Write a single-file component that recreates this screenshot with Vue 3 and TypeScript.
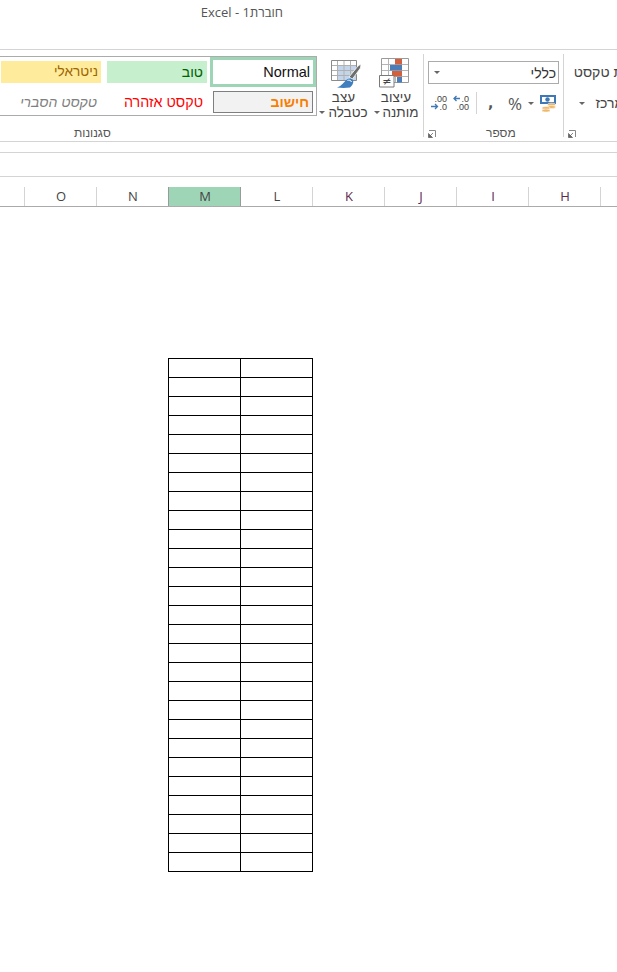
<template>
  <div class="excel">
    <div class="title-bar" dir="rtl">חוברת1 - Excel</div>

    <div class="ribbon">
      <section class="group styles-group">
        <div class="styles-body">
          <div class="gallery" dir="rtl">
            <div
              v-for="cell in styleCells"
              :key="cell.label"
              class="style-cell"
              :class="cell.kind"
            >
              {{ cell.label }}
            </div>
          </div>

          <button class="big-btn table-btn">
            <svg width="32" height="33" viewBox="0 0 32 33">
              <path d="M1.500 4.500h25v20h-25z" fill="#fff" />
              <path d="M7.500 9.500h19v15h-19z" fill="#c3d5ea" />
              <path d="M1.500 9.500h25M1.500 14.500h25M1.500 19.500h25M7.500 4.500v20M14 4.500v20M20.500 4.500v20" stroke="#b0b0b0" fill="none" />
              <path d="M1.500 4.500h25v20h-25z" fill="none" stroke="#8a8a8a" />
              <path d="M19 21l9-11 3-2-.5 4-8 11z" fill="#6e6e6e" stroke="#fff" stroke-width=".8" />
              <path d="M17 23.500c2-1.500 5-1 6 .5 1 3-1 6-3 7.500-4 .5-9 .5-13 0 5-1.500 7-6 10-8z" fill="#3f7fbf" />
              <path d="M17.500 24.500c1.500-.8 3.500-.2 4 1.500" stroke="#fff" fill="none" />
            </svg>
            <span class="btn-label">עצב</span>
            <span class="btn-label with-caret" dir="rtl">כטבלה<i class="caret" /></span>
          </button>

          <button class="big-btn cond-btn">
            <svg width="34" height="33" viewBox="0 0 34 33">
              <path d="M2.500 2.500h27v24h-27z" fill="#fff" />
              <path d="M9.500 2.500v24M16.500 2.500v24M22.500 2.500v24M2.500 8.500h27M2.500 14.500h27M2.500 20.500h27" stroke="#b5b5b5" fill="none" />
              <path d="M2.500 2.500h27v24h-27z" fill="none" stroke="#9a9a9a" />
              <path d="M16 3h7v5.500h-7z" fill="#d2603c" />
              <path d="M11 9h12v5.500H11z" fill="#4a7eba" />
              <path d="M13 15h10v5.500H13z" fill="#d2603c" />
              <path d="M18 21h5v5.500h-5z" fill="#4a7eba" />
              <path d="M.500 19.500h14.500v11.500H.500z" fill="#fff" stroke="#7a7a7a" />
              <text x="7.800" y="29" text-anchor="middle" class="neq">≠</text>
            </svg>
            <span class="btn-label">עיצוב</span>
            <span class="btn-label with-caret" dir="rtl">מותנה<i class="caret" /></span>
          </button>
        </div>
        <div class="group-label" dir="rtl">סגנונות</div>
      </section>

      <section class="group number-group">
        <div class="combo" dir="rtl">
          <span>כללי</span>
          <i class="caret" />
        </div>
        <div class="number-tools">
          <svg width="18" height="18" viewBox="0 0 18 18" class="dec-icon">
            <text x="17" y="7.500" text-anchor="end" class="mini">.00</text>
            <text x="17" y="16" text-anchor="end" class="mini">.0</text>
            <path d="M1 12.500h6M5 10l2.500 2.500L5 15" stroke="#3f78b5" stroke-width="1.300" fill="none" />
          </svg>
          <svg width="18" height="18" viewBox="0 0 18 18">
            <text x="17" y="7.500" text-anchor="end" class="mini">.0</text>
            <text x="17" y="16" text-anchor="end" class="mini">.00</text>
            <path d="M2 4.500h6M4.500 2L2 4.500 4.500 7" stroke="#3f78b5" stroke-width="1.300" fill="none" />
          </svg>
          <span class="tool-sep" />
          <span class="comma">,</span>
          <span class="percent">%</span>
          <i class="caret" />
          <svg width="18" height="18" viewBox="0 0 18 18">
            <path d="M1 1h16v9H1z" fill="#3f78b5" />
            <path d="M3 3h12v5H3z" fill="#fff" />
            <circle cx="8.500" cy="5.500" r="2.200" fill="#3f78b5" />
            <ellipse cx="12.500" cy="10.500" rx="4" ry="1.500" fill="#efb768" stroke="#fff" stroke-width=".5" />
            <ellipse cx="12.500" cy="13" rx="4" ry="1.500" fill="#efb768" stroke="#fff" stroke-width=".5" />
            <ellipse cx="7" cy="14" rx="4" ry="1.500" fill="#efb768" stroke="#fff" stroke-width=".5" />
            <ellipse cx="7" cy="16.500" rx="4" ry="1.500" fill="#efb768" stroke="#fff" stroke-width=".5" />
          </svg>
        </div>
        <div class="group-label" dir="rtl">מספר</div>
        <svg class="launcher" width="8" height="8" viewBox="0 0 8 8">
          <path d="M1 .500h6.500V7" stroke="#888" fill="none" />
          <path d="M.500 3.500v4h4zM2 6l3-3" stroke="#666" stroke-width=".8" fill="#666" />
        </svg>
      </section>

      <section class="group align-group">
        <div class="align-line wrap" dir="rtl">גלישת טקסט</div>
        <div class="align-line merge" dir="rtl">מיזוג ומרכז<i class="caret" /></div>
        <svg class="launcher" width="8" height="8" viewBox="0 0 8 8">
          <path d="M1 .500h6.500V7" stroke="#888" fill="none" />
          <path d="M.500 3.500v4h4zM2 6l3-3" stroke="#666" stroke-width=".8" fill="#666" />
        </svg>
      </section>
    </div>

    <div class="ribbon-gap" />
    <div class="formula-bar" />

    <div class="col-headers">
      <div class="col-stub" />
      <div
        v-for="col in columns"
        :key="col"
        class="col-head"
        :class="{ active: col === 'M', far: 'KJIH'.includes(col) }"
      >
        {{ col }}
      </div>
      <div class="col-rest" />
    </div>

    <div class="sheet">
      <table class="cells">
        <tbody>
          <tr v-for="row in rowCount" :key="row">
            <td />
            <td />
          </tr>
        </tbody>
      </table>
    </div>
  </div>
</template>

<script setup lang="ts">
const styleCells = [
  { label: 'Normal', kind: 'normal' },
  { label: 'טוב', kind: 'good' },
  { label: 'ניטראלי', kind: 'neutral' },
  { label: 'חישוב', kind: 'calc' },
  { label: 'טקסט אזהרה', kind: 'warn' },
  { label: 'טקסט הסברי', kind: 'explain' },
];

const columns = ['O', 'N', 'M', 'L', 'K', 'J', 'I', 'H'];
const rowCount = 27;
</script>

<style>
html,
body {
  margin: 0;
  background: #fff;
}
</style>

<style scoped>
.excel {
  width: 617px;
  height: 972px;
  overflow: hidden;
  background: #fff;
  color: #444;
  font-family: "Liberation Sans", "DejaVu Sans", sans-serif;
}

.title-bar {
  box-sizing: border-box;
  height: 50px;
  padding: 4px 334px 0 0;
  border-bottom: 1px solid #d4d4d4;
  font-family: "Open Sans", "Liberation Sans", sans-serif;
  font-size: 13px;
  line-height: 17px;
  text-align: right;
  color: #555;
}

.ribbon {
  display: flex;
  box-sizing: border-box;
  height: 92px;
  border-bottom: 1px solid #d4d4d4;
}

.group {
  position: relative;
  box-sizing: border-box;
  flex: none;
  height: 91px;
}

.group-label {
  position: absolute;
  bottom: 1px;
  font-size: 12px;
  line-height: 14px;
  color: #555;
}

.launcher {
  position: absolute;
  left: 4px;
  top: 80px;
}

.styles-group {
  width: 424px;
}

.styles-group::after,
.number-group::after {
  content: "";
  position: absolute;
  right: 0;
  top: 4px;
  width: 1px;
  height: 83px;
  background: #d4d4d4;
}

.styles-group .group-label {
  left: 74px;
}

.styles-body {
  display: flex;
  align-items: flex-start;
  padding-top: 6px;
  margin-left: -4px;
}

.gallery {
  box-sizing: border-box;
  display: grid;
  grid-template-columns: 106px 103px 100px;
  grid-template-rows: 30px 30px;
  column-gap: 3px;
  width: 321px;
  height: 60px;
  border: 1px solid #ababab;
  border-left: none;
  flex: none;
  direction: rtl;
  font-size: 14px;
}

.style-cell {
  box-sizing: border-box;
  align-self: center;
  justify-self: start;
  width: 100px;
  height: 22px;
  padding: 0 4px;
  line-height: 22px;
  white-space: nowrap;
}

.normal {
  align-self: start;
  width: 106px;
  height: 30px;
  border: 3px solid #9fd5b7;
  padding: 0 3px;
  background: #fff;
  color: #111;
  font-size: 14.500px;
  line-height: 24px;
}

.good {
  background: #c6efce;
  color: #006100;
}

.neutral {
  padding: 0 3px;
  background: #ffeb9c;
  color: #9c6500;
  font-size: 13.600px;
}

.calc {
  width: 100px;
  margin-right: 3px;
  border: 1px solid #7f7f7f;
  background: #f2f2f2;
  color: #fa7d00;
  font-weight: bold;
  line-height: 20px;
  padding: 0 3px;
}

.warn {
  color: #f00;
  font-size: 14.300px;
}

.explain {
  color: #7f7f7f;
  font-style: italic;
}

.big-btn {
  display: flex;
  flex-direction: column;
  align-items: center;
  flex: none;
  padding: 0;
  border: none;
  background: none;
  color: #444;
  font: inherit;
  font-size: 13.500px;
}

.table-btn {
  width: 52px;
  margin-left: 3px;
}

.table-btn .btn-label {
  margin-right: 5px;
}

.cond-btn {
  width: 48px;
}

.btn-label {
  height: 15px;
  line-height: 15px;
  white-space: nowrap;
}

.table-btn .btn-label:first-of-type,
.cond-btn .btn-label:first-of-type {
  margin-top: 1px;
}

.with-caret {
  display: flex;
  align-items: center;
  gap: 3px;
}

.caret {
  display: inline-block;
  flex: none;
  width: 0;
  height: 0;
  border-left: 3px solid transparent;
  border-right: 3px solid transparent;
  border-top: 3px solid #666;
}

.number-group {
  width: 140px;
  padding: 11px 5px 0 4px;
}

.combo {
  box-sizing: border-box;
  display: flex;
  align-items: center;
  justify-content: space-between;
  width: 131px;
  height: 23px;
  padding: 0 2px 0 5px;
  border: 1px solid #ababab;
  font-size: 14px;
  color: #333;
}

.number-tools {
  display: flex;
  align-items: center;
  height: 20px;
  margin-top: 9px;
  padding-left: 2px;
}

.number-tools svg {
  flex: none;
}

.dec-icon {
  margin-right: 4px;
}

.tool-sep {
  width: 1px;
  height: 22px;
  margin: 0 11px 0 6px;
  background: #d4d4d4;
}

.comma {
  width: 8px;
  margin-right: 12px;
  font-family: "DejaVu Sans", sans-serif;
  font-size: 14px;
  font-weight: bold;
  line-height: 12px;
  color: #555;
}

.percent {
  margin-right: 6px;
  font-family: "Open Sans", sans-serif;
  font-size: 17px;
  color: #555;
}

.number-tools .caret {
  margin-right: 5px;
}

.number-group .group-label {
  left: 62px;
}

.align-group {
  width: 53px;
  overflow: hidden;
}

.align-line {
  position: absolute;
  font-size: 14px;
  white-space: nowrap;
}

.wrap {
  top: 14px;
  right: -33px;
}

.merge {
  top: 45px;
  right: -42px;
  display: flex;
  align-items: center;
  gap: 11px;
}

.ribbon-gap {
  box-sizing: border-box;
  height: 11px;
  border-bottom: 1px solid #d4d4d4;
}

.formula-bar {
  box-sizing: border-box;
  height: 24px;
  border-bottom: 1px solid #d4d4d4;
}

.col-headers {
  display: flex;
  box-sizing: border-box;
  height: 30px;
  padding-top: 10px;
  border-bottom: 1px solid #ababab;
}

.col-stub {
  box-sizing: border-box;
  width: 25px;
  border-right: 1px solid #d4d4d4;
}

.col-head {
  box-sizing: border-box;
  flex: none;
  width: 72px;
  padding-left: 1px;
  border-right: 1px solid #d4d4d4;
  font-family: "Open Sans", sans-serif;
  font-size: 13px;
  line-height: 19px;
  text-align: center;
  color: #444;
}

.col-head.active {
  margin-left: -1px;
  width: 73px;
  border-left: 1px solid #9a9a9a;
  border-right-color: #9a9a9a;
  background: #9fd5b7;
}

.col-head.far {
  color: #5a2a4e;
}

.col-rest {
  flex: 1;
}

.sheet {
  padding: 151px 0 0 168px;
}

.cells {
  table-layout: fixed;
  width: 145px;
  border-collapse: collapse;
}

.cells td {
  width: 72px;
  height: 19px;
  padding: 0;
  border: 1px solid #000;
  box-sizing: border-box;
}

.neq {
  font-family: "DejaVu Sans", sans-serif;
  font-size: 11px;
  fill: #444;
}

.mini {
  font-family: "Liberation Sans", sans-serif;
  font-size: 9px;
  fill: #444;
}
</style>
